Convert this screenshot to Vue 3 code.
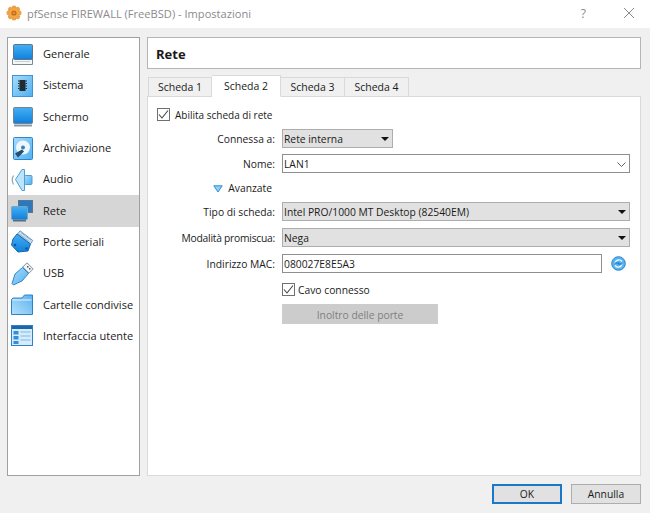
<script setup>
const sections = [
  { id: 'general', label: 'Generale' },
  { id: 'system', label: 'Sistema' },
  { id: 'display', label: 'Schermo' },
  { id: 'storage', label: 'Archiviazione' },
  { id: 'audio', label: 'Audio' },
  { id: 'network', label: 'Rete', active: true },
  { id: 'serial', label: 'Porte seriali' },
  { id: 'usb', label: 'USB' },
  { id: 'shared', label: 'Cartelle condivise' },
  { id: 'ui', label: 'Interfaccia utente' }
]
const tabs = ['Scheda 1', 'Scheda 2', 'Scheda 3', 'Scheda 4']
const petals = [0, 45, 90, 135, 180, 225, 270, 315]
</script>

<template>
  <div class="window">
    <svg class="defs" width="0" height="0">
      <defs>
        <linearGradient id="screen" x1="0" y1="0" x2="0" y2="1">
          <stop offset="0" stop-color="#45b0f5" />
          <stop offset="1" stop-color="#0f7fdc" />
        </linearGradient>
        <linearGradient id="pale" x1="0" y1="0" x2="1" y2="1">
          <stop offset="0" stop-color="#a9dcfa" />
          <stop offset="1" stop-color="#4fb0ef" />
        </linearGradient>
        <linearGradient id="folder" x1="0" y1="1" x2="1" y2="0">
          <stop offset="0" stop-color="#b4e0fb" />
          <stop offset="1" stop-color="#5bb2ee" />
        </linearGradient>
      </defs>
    </svg>

    <header class="titlebar">
      <svg class="app-icon" width="16" height="16" viewBox="0 0 16 16">
        <circle v-for="a in petals" :key="a" cx="8" cy="2.8" r="2.4" fill="#eba04a" :transform="`rotate(${a} 8 8)`" />
        <circle cx="8" cy="8" r="5" fill="#f2a93e" />
        <circle cx="8" cy="8" r="2.6" fill="#c96a24" />
        <circle cx="8" cy="8" r="1.1" fill="#eb9a3a" />
      </svg>
      <span class="title">pfSense FIREWALL (FreeBSD) - Impostazioni</span>
      <span class="help">?</span>
      <svg class="close" width="12" height="12" viewBox="0 0 12 12">
        <path d="M1 1 11 11M11 1 1 11" stroke="#8a8a8a" stroke-width="1" fill="none" />
      </svg>
    </header>

    <div class="body">
      <nav class="sidebar">
        <div v-for="s in sections" :key="s.id" class="nav-item" :class="{ active: s.active }">
          <svg class="nav-icon" width="24" height="24" viewBox="0 0 24 24">
            <template v-if="s.id === 'general'">
              <path d="M2.500 15.500v6h20v-6" fill="#f6f6f6" stroke="#7d8a94" />
              <path d="M5 18.500h15" stroke="#c8ced3" />
              <rect x="3.500" y="1.500" width="19" height="15" rx="1" fill="url(#screen)" stroke="#5f7486" />
            </template>
            <template v-else-if="s.id === 'system'">
              <rect x="2.500" y="1.500" width="20" height="21" fill="url(#pale)" stroke="#3f93d6" />
              <rect x="9.500" y="6" width="6" height="11" fill="#1f2c36" />
              <path d="M8 7h1.500M8 9.500h1.500M8 12h1.500M8 14.500h1.500M15.500 7H17M15.500 9.500H17M15.500 12H17M15.500 14.500H17" stroke="#1f2c36" />
            </template>
            <template v-else-if="s.id === 'display'">
              <rect x="3.500" y="2.500" width="19" height="16" rx="1" fill="url(#screen)" stroke="#71838f" />
              <path d="M4 20.500h18" stroke="#8a98a3" stroke-width="2" />
            </template>
            <template v-else-if="s.id === 'storage'">
              <rect x="3.500" y="0.500" width="19" height="22" rx="1" fill="url(#pale)" stroke="#2a86cf" />
              <circle cx="13" cy="10.500" r="7" fill="#eef7fd" />
              <circle cx="13" cy="10.500" r="2" fill="#3a7eb5" />
              <path d="M5 16.500l7-4 2 2-6 6z" fill="#24506f" />
            </template>
            <template v-else-if="s.id === 'audio'">
              <path d="M5.500 11.500 12 1.500h2.500v21H12z" fill="#bfe4fa" stroke="#4a9fd8" />
              <rect x="14.500" y="7.500" width="7.500" height="9" rx="1" fill="url(#pale)" stroke="#4a9fd8" />
              <path d="M3.500 7.500Q1 12 3.500 16.500" stroke="#8aa6ba" stroke-width="1.200" fill="none" />
            </template>
            <template v-else-if="s.id === 'network'">
              <rect x="8.500" y="1.500" width="14" height="12" fill="#2b79bb" stroke="#56778f" />
              <rect x="1.500" y="7.500" width="16" height="13" rx="1" fill="url(#screen)" stroke="#7ea3bd" />
              <path d="M3 21.500h13" stroke="#546f84" stroke-width="2" />
            </template>
            <template v-else-if="s.id === 'serial'">
              <path d="M10 .8 22.800 10.500 20.500 14 7.500 4z" fill="#cfe0ec" stroke="#6d9cc0" />
              <path d="M11 2.500 21 10.200M9.500 4 19.500 11.800" stroke="#8db5d3" />
              <path d="M7 4 20.500 14l-2.500 7-10 1-6.500-7 1.500-6z" fill="url(#screen)" stroke="#1769ac" />
              <circle cx="5" cy="15" r="1.300" fill="#0c5795" />
              <circle cx="16.500" cy="18.500" r="1.300" fill="#0c5795" />
            </template>
            <template v-else-if="s.id === 'usb'">
              <path d="M17 .8 23.200 7l-4.200 4.200-6.200-6.200z" fill="#f0f3f5" stroke="#84929c" />
              <path d="M17 4h1.500v1.500H17zM19 6h1.500v1.500H19z" fill="#4c5a64" />
              <path d="M12.500 5.500 18.500 11.500 12 19 7.500 21 3.500 23 2 21.500 3.500 17 5 12z" fill="url(#pale)" stroke="#2f88cc" />
            </template>
            <template v-else-if="s.id === 'shared'">
              <path d="M1.500 6.500 3 5h9l2.500-3h8v19.500h-21z" fill="url(#folder)" stroke="#2a84cc" />
              <path d="M2.500 7h19" stroke="#e3f3fd" />
            </template>
            <template v-else>
              <rect x="1.500" y="1.500" width="21" height="20" fill="#d7ebfa" stroke="#2a84cc" />
              <rect x="2" y="2" width="20" height="3" fill="#1c67aa" />
              <rect x="3.500" y="7" width="5" height="3.500" fill="#2f8fdc" />
              <rect x="3.500" y="12" width="5" height="3.500" fill="#2f8fdc" />
              <rect x="3.500" y="17" width="5" height="3" fill="#2f8fdc" />
              <path d="M10.500 8h10M10.500 12h10M10.500 16h10" stroke="#a8d3f2" stroke-width="2" />
            </template>
          </svg>
          <span class="nav-label">{{ s.label }}</span>
        </div>
      </nav>

      <main class="content">
        <div class="page-title">Rete</div>

        <div class="tabs">
          <div v-for="(t, i) in tabs" :key="t" class="tab" :class="{ current: i === 1 }">{{ t }}</div>
        </div>

        <section class="panel">
          <label class="check-row top-check">
            <span class="checkbox">
              <svg width="11" height="11" viewBox="0 0 11 11"><path d="M1 5.500 4 9 10 1.500" fill="none" stroke="#444" stroke-width="1.100" /></svg>
            </span>
            Abilita scheda di rete
          </label>

          <div class="form">
            <div class="row first">
              <span class="lbl">Connessa a:</span>
              <div class="combo short"><span>Rete interna</span><i class="caret"></i></div>
            </div>
            <div class="row">
              <span class="lbl">Nome:</span>
              <div class="field wide">
                <span>LAN1</span>
                <svg class="chevron" width="9" height="5" viewBox="0 0 9 5"><path d="M.5.500 4.500 4.500 8.500.5" fill="none" stroke="#666" /></svg>
              </div>
            </div>
            <div class="row advanced">
              <span class="lbl adv">
                <svg width="10" height="8" viewBox="0 0 10 8"><path d="M.8.800h8.400L5 7z" fill="#8fd0f5" stroke="#2b8fd8" /></svg>
                Avanzate
              </span>
            </div>
            <div class="row">
              <span class="lbl">Tipo di scheda:</span>
              <div class="combo wide"><span>Intel PRO/1000 MT Desktop (82540EM)</span><i class="caret"></i></div>
            </div>
            <div class="row">
              <span class="lbl tight">Modalità promiscua:</span>
              <div class="combo wide"><span>Nega</span><i class="caret"></i></div>
            </div>
            <div class="row">
              <span class="lbl">Indirizzo MAC:</span>
              <div class="field mac"><span>080027E8E5A3</span></div>
              <svg class="refresh" width="15" height="15" viewBox="0 0 15 15">
                <circle cx="7.500" cy="7.500" r="6.800" fill="#58b2f0" stroke="#2a84cc" />
                <path d="M11 5.500Q9.500 3.500 7 4 4.500 4.500 4 7M4 9.500Q5.500 11.500 8 11 10.500 10.500 11 8" fill="none" stroke="#e9f6ff" stroke-width="1.300" />
                <path d="M4 7h4M7 8h4" stroke="#1c6db0" stroke-width="1" />
              </svg>
            </div>
            <div class="row cable">
              <span class="lbl"></span>
              <label class="check-row">
                <span class="checkbox">
                  <svg width="11" height="11" viewBox="0 0 11 11"><path d="M1 5.500 4 9 10 1.500" fill="none" stroke="#444" stroke-width="1.100" /></svg>
                </span>
                Cavo connesso
              </label>
            </div>
            <div class="row">
              <span class="lbl"></span>
              <div class="forward">Inoltro delle porte</div>
            </div>
          </div>
        </section>
      </main>
    </div>

    <footer class="actions">
      <button class="btn default">OK</button>
      <button class="btn">Annulla</button>
    </footer>
  </div>
</template>

<style>
html, body {
  margin: 0;
  background: #f0f0f0;
}
</style>

<style scoped>
.window {
  width: 650px;
  height: 513px;
  background: #f0f0f0;
  font-family: "Open Sans", "Noto Sans", sans-serif;
  font-size: 10.3px;
  color: #1a1a1a;
  display: flex;
  flex-direction: column;
  overflow: hidden;
}
.defs {
  flex-shrink: 0;
}
.titlebar {
  height: 28px;
  background: #fff;
  display: flex;
  align-items: center;
  padding: 0 15px 2px 6px;
  box-sizing: border-box;
  flex-shrink: 0;
}
.app-icon {
  margin-right: 5px;
}
.title {
  flex: 1;
  font-size: 11.1px;
  color: #8b8b8b;
}
.help {
  font-size: 12px;
  color: #8a8a8a;
  margin-right: 37px;
}
.body {
  flex: 1;
  display: flex;
  gap: 7px;
  padding: 9px 9px 0 7px;
  min-height: 0;
}
.sidebar {
  width: 133px;
  height: 439px;
  box-sizing: border-box;
  background: #fff;
  border: 1px solid #a0a0a0;
  padding-top: 1px;
  flex-shrink: 0;
}
.nav-item {
  height: 31.3px;
  display: flex;
  align-items: center;
  padding-left: 2px;
  font-size: 11px;
  white-space: nowrap;
}
.nav-item.active {
  background: #d6d6d6;
}
.nav-icon {
  flex-shrink: 0;
  margin-right: 9px;
}
.nav-label {
  padding-bottom: 2px;
}
.content {
  flex: 1;
  height: 439px;
  display: flex;
  flex-direction: column;
  min-width: 0;
}
.page-title {
  height: 32px;
  box-sizing: border-box;
  background: #fff;
  border: 1px solid #b5b5b5;
  display: flex;
  align-items: center;
  padding: 1px 0 0 8px;
  font-size: 13px;
  font-weight: 700;
  flex-shrink: 0;
}
.tabs {
  display: flex;
  align-items: flex-end;
  height: 28px;
  padding-left: 1px;
  flex-shrink: 0;
  margin-bottom: -1px;
  position: relative;
  z-index: 1;
}
.tab {
  width: 64px;
  height: 20px;
  box-sizing: border-box;
  background: #f0f0f0;
  border: 1px solid #d9d9d9;
  border-left-width: 0;
  display: flex;
  align-items: center;
  justify-content: center;
  font-size: 10.5px;
}
.tab:first-child {
  border-left-width: 1px;
}
.tab.current {
  width: 69px;
  height: 22px;
  background: #fff;
  border-bottom-color: #fff;
}
.panel {
  flex: 1;
  background: #fff;
  border: 1px solid #d9d9d9;
  padding: 10px 0 0 9px;
}
.check-row {
  display: flex;
  align-items: center;
  gap: 3px;
  height: 14px;
  padding-top: 1px;
  box-sizing: border-box;
}
.top-check {
  gap: 5px;
  font-size: 10px;
}
.checkbox {
  width: 13px;
  height: 13px;
  border: 1px solid #707070;
  background: #fff;
  display: flex;
  align-items: center;
  justify-content: center;
  flex-shrink: 0;
  box-sizing: border-box;
  margin-top: -1px;
}
.form {
  margin-top: 7px;
  display: flex;
  flex-direction: column;
  gap: 7px;
}
.row {
  display: flex;
  align-items: center;
  min-height: 19px;
}
.row.first {
  margin-top: 1px;
  margin-bottom: -1px;
}
.lbl {
  width: 118px;
  margin-right: 7px;
  padding-top: 1px;
  text-align: right;
  flex-shrink: 0;
}
.lbl.tight {
  letter-spacing: -0.25px;
}
.combo,
.field {
  height: 19px;
  box-sizing: border-box;
  display: flex;
  align-items: center;
  justify-content: space-between;
  padding: 1px 3px 0 1px;
}
.combo {
  background: #e1e1e1;
  border: 1px solid #adadad;
}
.field {
  background: #fff;
  border: 1px solid #8f8f8f;
}
.short {
  width: 111px;
}
.wide {
  width: 348px;
}
.mac {
  width: 320px;
}
.caret {
  width: 0;
  height: 0;
  border-left: 4px solid transparent;
  border-right: 4px solid transparent;
  border-top: 4px solid #111;
}
.advanced {
  height: 13px;
  min-height: 13px;
  margin-top: 2px;
}
.adv {
  display: flex;
  justify-content: flex-end;
  align-items: center;
  gap: 5px;
  width: 115px;
  margin-right: 10px;
  padding-top: 0;
  line-height: 13px;
}
.refresh {
  margin-left: 9px;
}
.cable {
  min-height: 14px;
  margin-top: 2px;
}
.forward {
  width: 156px;
  height: 20px;
  background: #ccc;
  color: #808080;
  display: flex;
  align-items: center;
  justify-content: center;
  padding-top: 1px;
  box-sizing: border-box;
  margin-top: 1px;
}
.actions {
  height: 37px;
  box-sizing: border-box;
  display: flex;
  justify-content: flex-end;
  gap: 9px;
  padding: 8px 9px 0 0;
  flex-shrink: 0;
}
.btn {
  width: 70px;
  height: 20px;
  box-sizing: border-box;
  background: #e1e1e1;
  border: 1px solid #adadad;
  font: inherit;
  color: #1a1a1a;
  padding: 0;
}
.btn.default {
  border: 2px solid #1a78c8;
}
</style>
